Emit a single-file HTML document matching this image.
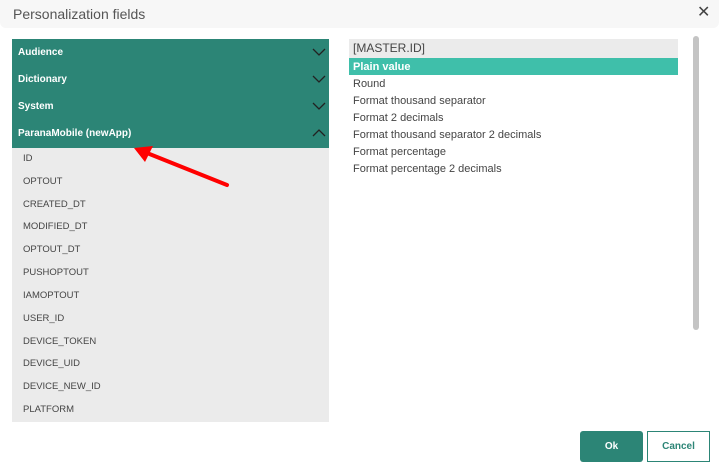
<!DOCTYPE html>
<html><head><meta charset="utf-8"><style>
*{margin:0;padding:0;box-sizing:border-box}
body{width:719px;height:464px;background:#fff;font-family:"Liberation Sans",Arial,sans-serif;position:relative;overflow:hidden}
.hdr{position:absolute;left:0;top:0;width:719px;height:28px;background:#f7f7f7;border-radius:0 0 6px 6px}
.title{position:absolute;left:13px;top:6px;font-size:14px;color:#555}
.x{position:absolute;left:697px;top:2px;font-size:16px;color:#444}
.acc{position:absolute;left:12px;top:39px;width:317px;height:109px;background:#2c8576}
.ah{height:27px;color:#fff;font-weight:bold;font-size:10px;line-height:27px;padding-left:6px;position:relative}
.ah svg{position:absolute;right:3px;top:9px}
.list{position:absolute;left:12px;top:148px;width:317px;height:274px;background:#ebebeb}
.li{position:absolute;left:23px;font-size:9.5px;color:#444}
.r{position:absolute;left:349px;width:329px;font-size:11px;color:#444;padding-left:4px;height:17px;line-height:17px}
.sb{position:absolute;left:693px;top:36px;width:6px;height:294px;background:#c4c4c4;border-radius:3px}
.ok{position:absolute;left:580px;top:431px;width:63px;height:31px;background:#2c8576;border-radius:3px;color:#fff;font-weight:bold;font-size:10px;text-align:center;line-height:31px}
.cancel{position:absolute;left:647px;top:431px;width:63px;height:31px;border:1px solid #2c8576;color:#2c8576;font-weight:bold;font-size:10px;text-align:center;line-height:29px}
</style></head><body>
<div class="hdr"></div>
<div class="title">Personalization fields</div>
<div class="x">✕</div>
<div class="acc">
<div class="ah">Audience<svg width="14" height="8"><path d="M1 1L7 7L13 1" stroke="#222" stroke-width="1.3" fill="none"/></svg></div>
<div class="ah">Dictionary<svg width="14" height="8"><path d="M1 1L7 7L13 1" stroke="#222" stroke-width="1.3" fill="none"/></svg></div>
<div class="ah">System<svg width="14" height="8"><path d="M1 1L7 7L13 1" stroke="#222" stroke-width="1.3" fill="none"/></svg></div>
<div class="ah">ParanaMobile (newApp)<svg width="14" height="8"><path d="M1 7L7 1L13 7" stroke="#222" stroke-width="1.3" fill="none"/></svg></div>
</div>
<div class="list"></div>
<div class="li" style="top:153px">ID</div>
<div class="li" style="top:176px">OPTOUT</div>
<div class="li" style="top:199px">CREATED_DT</div>
<div class="li" style="top:221px">MODIFIED_DT</div>
<div class="li" style="top:244px">OPTOUT_DT</div>
<div class="li" style="top:267px">PUSHOPTOUT</div>
<div class="li" style="top:290px">IAMOPTOUT</div>
<div class="li" style="top:313px">USER_ID</div>
<div class="li" style="top:336px">DEVICE_TOKEN</div>
<div class="li" style="top:358px">DEVICE_UID</div>
<div class="li" style="top:381px">DEVICE_NEW_ID</div>
<div class="li" style="top:404px">PLATFORM</div>
<div class="r" style="top:39px;height:19px;line-height:19px;background:#ebebeb;font-size:12px">[MASTER.ID]</div>
<div class="r" style="top:58px;background:#3fbfaa;color:#fff;font-weight:bold;line-height:18px">Plain value</div>
<div class="r" style="top:76px">Round</div>
<div class="r" style="top:93px">Format thousand separator</div>
<div class="r" style="top:110px">Format 2 decimals</div>
<div class="r" style="top:127px">Format thousand separator 2 decimals</div>
<div class="r" style="top:144px">Format percentage</div>
<div class="r" style="top:161px">Format percentage 2 decimals</div>
<div class="sb"></div>
<svg style="position:absolute;left:0;top:0" width="719" height="464"><path d="M227 185L142 151" stroke="#f00" stroke-width="4" stroke-linecap="round"/><path d="M134 148L153 146L145 162Z" fill="#f00"/></svg>
<div class="ok">Ok</div>
<div class="cancel">Cancel</div>
</body></html>
